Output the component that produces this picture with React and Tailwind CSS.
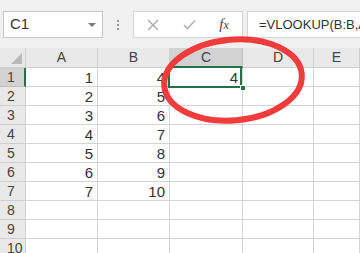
import React from 'react';

const COLS = ['A', 'B', 'C', 'D', 'E'];
const COL_W = ['w-[72px]', 'w-[72px]', 'w-[73px]', 'w-[71px]', 'flex-1'];
const ROWS = [
  ['1', '4', '4'],
  ['2', '5', ''],
  ['3', '6', ''],
  ['4', '7', ''],
  ['5', '8', ''],
  ['6', '9', ''],
  ['7', '10', ''],
  ['', '', ''],
  ['', '', ''],
  ['', '', ''],
];

export default function App() {
  return (
    <div className="relative w-[360px] h-[253px] overflow-hidden bg-white text-[#333]" style={{ fontFamily: '"Liberation Sans", Arial, sans-serif' }}>
      {/* formula bar */}
      <div className="h-[48px] bg-[#f0f0f0] flex items-start pt-[11px] pl-[3px]">
        <div className="shrink-0 w-[100px] h-[27px] bg-white border border-[#c6c6c6] flex items-center justify-between pl-[6px] pr-[6px]">
          <span className="text-[15px] text-[#333]">C1</span>
          <span className="w-0 h-0 border-l-[4px] border-r-[4px] border-t-[4px] border-l-transparent border-r-transparent border-t-[#777]" />
        </div>
        <div className="shrink-0 w-[30px] h-[27px] flex flex-col items-center justify-center gap-[2px]">
          <span className="w-[2px] h-[2px] bg-[#999]" />
          <span className="w-[2px] h-[2px] bg-[#999]" />
          <span className="w-[2px] h-[2px] bg-[#999]" />
        </div>
        <div className="shrink-0 w-[110px] h-[27px] bg-white border border-[#d4d4d4] flex items-center">
          <span className="w-[38px] flex justify-center">
            <svg width="12" height="12" viewBox="0 0 12 12"><path d="M1 1 L11 11 M11 1 L1 11" stroke="#a8a8a8" strokeWidth="1.4" /></svg>
          </span>
          <span className="w-[34px] flex justify-center">
            <svg width="13" height="11" viewBox="0 0 13 11"><path d="M1 6 L4.5 9.5 L12 1.5" stroke="#b0b0b0" strokeWidth="1.6" fill="none" /></svg>
          </span>
          <span className="flex-1 text-center text-[15px] italic text-[#444]" style={{ fontFamily: '"Liberation Serif", serif' }}>f<span className="text-[12px]">x</span></span>
        </div>
        <div className="ml-[4px] flex-1 min-w-0 overflow-hidden h-[27px] bg-white border border-[#d4d4d4] border-r-0 flex items-center pl-[11px]">
          <span className="text-[13px] text-[#333] whitespace-nowrap">=VLOOKUP(B:B,A:A,1,0)</span>
        </div>
      </div>

      {/* column headers */}
      <div className="flex h-[20px] bg-[#e9e9e9] text-[14px] text-[#444]">
        <div className="w-[26px] shrink-0 border-r border-b border-[#cfcfcf] relative">
          <span className="absolute right-[3px] bottom-[3px] w-0 h-0" style={{ borderBottom: '11px solid #b8b8b8', borderLeft: '11px solid transparent' }} />
        </div>
        {COLS.map((c, i) => (
          <div
            key={c}
            className={`${COL_W[i]} shrink-0 flex items-center justify-center border-r ${c === 'C' ? 'bg-[#d2d2d2] border-b-2 border-b-[#217346] border-r-[#bdbdbd]' : 'border-b border-[#cfcfcf]'}`}
          >
            {c}
          </div>
        ))}
      </div>

      {/* rows */}
      {ROWS.map((r, ri) => (
        <div key={ri} className="flex h-[19px]">
          <div
            className={`w-[26px] shrink-0 flex items-center pl-[7px] text-[14px] text-[#444] border-b ${ri === 0 ? 'bg-[#d2d2d2] border-r-2 border-r-[#217346] border-b-[#bdbdbd]' : 'bg-[#e9e9e9] border-r border-[#cfcfcf]'}`}
          >
            {ri + 1}
          </div>
          {COLS.map((c, ci) => (
            <div
              key={c}
              className={`${COL_W[ci]} shrink-0 flex items-center justify-end pr-[4px] border-r border-b border-[#d4d4d4] text-[15px] leading-none`}
            >
              {ci < 3 ? r[ci] : ''}
            </div>
          ))}
        </div>
      ))}

      {/* active cell */}
      <div className="absolute left-[168px] top-[66px] w-[74px] h-[22px] border-2 border-[#217346]" />
      <div className="absolute left-[240px] top-[85px] w-[6px] h-[6px] bg-[#217346] border border-white" />

      {/* red marker */}
      <svg className="absolute left-0 top-0" width="360" height="253" viewBox="0 0 360 253">
        <ellipse cx="233" cy="80" rx="69" ry="40.5" transform="rotate(-5 233 80)" fill="none" stroke="#f23c3c" strokeWidth="6" />
      </svg>
    </div>
  );
}
